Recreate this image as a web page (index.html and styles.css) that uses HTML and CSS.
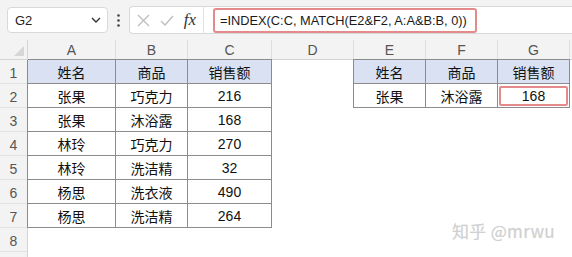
FILE: index.html
```html
<!DOCTYPE html>
<html>
<head>
  <meta charset="utf-8">
  <title>INDEX MATCH</title>
  <link rel="stylesheet" href="styles.css">
</head>
<body>
  <div class="app">
    <div class="toolbar">
      <div class="namebox">
        <span>G2</span>
        <svg width="10" height="6" viewBox="0 0 10 6"><path d="M1 1 L5 5 L9 1" fill="none" stroke="#333" stroke-width="1.4"/></svg>
      </div>
      <div class="dots">
        <svg width="3" height="13" viewBox="0 0 3 13"><circle cx="1.5" cy="1.5" r="1.3" fill="#444"/><circle cx="1.5" cy="6.5" r="1.3" fill="#444"/><circle cx="1.5" cy="11.5" r="1.3" fill="#444"/></svg>
      </div>
      <div class="fbar">
        <div class="fbtns">
          <svg width="13" height="13" viewBox="0 0 13 13"><path d="M1 1 L12 12 M12 1 L1 12" stroke="#bdbdbd" stroke-width="1.3"/></svg>
          <svg width="14" height="11" viewBox="0 0 14 11"><path d="M1 6 L5 10 L13 1" fill="none" stroke="#bdbdbd" stroke-width="1.3"/></svg>
          <span class="fx">fx</span>
        </div>
        <div class="redbox">=INDEX(C:C, MATCH(E2&amp;F2, A:A&amp;B:B, 0))</div>
      </div>
    </div>

    <div class="sheet">
      <!-- column headers -->
      <div class="corner"><span class="tri"></span></div>
      <div class="ch">A</div><div class="ch">B</div><div class="ch">C</div><div class="ch">D</div>
      <div class="ch">E</div><div class="ch">F</div><div class="ch">G</div><div class="ch last"></div>

      <!-- row 1 -->
      <div class="rh">1</div>
      <div class="c t tl tt h">姓名</div><div class="c t tt h">商品</div><div class="c t tt h">销售额</div>
      <div class="c"></div>
      <div class="c t tl tt h">姓名</div><div class="c t tt h">商品</div><div class="c t tt h">销售额</div>
      <div class="c"></div>

      <!-- row 2 -->
      <div class="rh">2</div>
      <div class="c t tl">张果</div><div class="c t">巧克力</div><div class="c t">216</div>
      <div class="c"></div>
      <div class="c t tl">张果</div><div class="c t">沐浴露</div><div class="c t sel">168</div>
      <div class="c"></div>

      <!-- row 3 -->
      <div class="rh">3</div>
      <div class="c t tl">张果</div><div class="c t">沐浴露</div><div class="c t">168</div>
      <div class="c"></div><div class="c"></div><div class="c"></div><div class="c"></div><div class="c"></div>

      <!-- row 4 -->
      <div class="rh">4</div>
      <div class="c t tl">林玲</div><div class="c t">巧克力</div><div class="c t">270</div>
      <div class="c"></div><div class="c"></div><div class="c"></div><div class="c"></div><div class="c"></div>

      <!-- row 5 -->
      <div class="rh">5</div>
      <div class="c t tl">林玲</div><div class="c t">洗洁精</div><div class="c t">32</div>
      <div class="c"></div><div class="c"></div><div class="c"></div><div class="c"></div><div class="c"></div>

      <!-- row 6 -->
      <div class="rh">6</div>
      <div class="c t tl">杨思</div><div class="c t">洗衣液</div><div class="c t">490</div>
      <div class="c"></div><div class="c"></div><div class="c"></div><div class="c"></div><div class="c"></div>

      <!-- row 7 -->
      <div class="rh">7</div>
      <div class="c t tl">杨思</div><div class="c t">洗洁精</div><div class="c t">264</div>
      <div class="c"></div><div class="c"></div><div class="c"></div><div class="c"></div><div class="c"></div>

      <!-- row 8, and the top of row 9 -->
      <div class="rh">8</div>
      <div class="c"></div><div class="c"></div><div class="c"></div><div class="c"></div><div class="c"></div><div class="c"></div><div class="c"></div><div class="c"></div>
      <div class="rh"></div>
    </div>

    <div class="watermark">知乎 @mrwu</div>
  </div>
</body>
</html>
```

FILE: styles.css
```css
body {
  margin: 0;
  background: #fff;
  font-family: "Liberation Sans", "Noto Sans CJK SC", sans-serif;
}

.app {
  position: relative;
  width: 572px;
  height: 257px;
  overflow: hidden;
}

/* formula bar */
.toolbar {
  display: flex;
  align-items: center;
  height: 40px;
  padding-left: 7px;
  background: #f3f3f3;
  box-sizing: border-box;
}

.namebox {
  display: flex;
  align-items: center;
  justify-content: space-between;
  width: 101px;
  height: 26px;
  padding: 0 6px 0 7px;
  box-sizing: border-box;
  background: #fff;
  border: 1px solid #d9d9d9;
  border-radius: 4px;
  font-size: 13px;
  color: #222;
}

.dots {
  display: flex;
  justify-content: center;
  width: 21px;
}

.fbar {
  flex: 1;
  display: flex;
  align-items: center;
  height: 26px;
  background: #fff;
  border: 1px solid #d9d9d9;
  border-right: none;
  border-radius: 4px 0 0 4px;
}

.fbtns {
  display: flex;
  align-items: center;
  justify-content: space-between;
  width: 74px;
  height: 100%;
  padding: 0 7px 0 7px;
  box-sizing: border-box;
  border-right: 1px solid #e3e3e3;
}

.fx {
  font-family: "Liberation Serif", serif;
  font-style: italic;
  font-size: 17px;
  color: #333;
}

.redbox {
  display: flex;
  align-items: center;
  width: 264px;
  height: 25px;
  margin-left: 9px;
  padding-left: 5px;
  box-sizing: border-box;
  border: 2px solid #e58a8a;
  border-radius: 3px;
  font-size: 12.8px;
  color: #1a1a1a;
  white-space: nowrap;
}

/* sheet */
.sheet {
  display: grid;
  grid-template-columns: 28px 88px 72px 84px 82px 72px 72px 72px 1fr;
  grid-template-rows: 20px repeat(9, 24px);
}

.corner {
  position: relative;
  background: #f3f3f3;
  border-right: 1px solid #d4d4d4;
  border-bottom: 1px solid #d4d4d4;
}

.tri {
  position: absolute;
  right: 3px;
  bottom: 3px;
  width: 0;
  height: 0;
  border-left: 10px solid transparent;
  border-bottom: 10px solid #d6d6d6;
}

.ch {
  display: flex;
  align-items: flex-end;
  justify-content: center;
  padding-bottom: 1px;
  background: #f3f3f3;
  border-right: 1px solid #dedede;
  border-bottom: 1px solid #d4d4d4;
  font-size: 14px;
  color: #555;
}

.ch.last {
  border-right: none;
}

.rh {
  display: flex;
  align-items: center;
  justify-content: center;
  padding-top: 2px;
  background: #f3f3f3;
  border-right: 1px solid #d4d4d4;
  border-bottom: 1px solid #e2e2e2;
  font-size: 14px;
  color: #555;
}

.c {
  display: flex;
  align-items: center;
  justify-content: center;
  padding-top: 1px;
  font-size: 14px;
  color: #111;
}

.t {
  border-right: 1px solid #8c8c8c;
  border-bottom: 1px solid #8c8c8c;
}

.tl {
  margin-left: -1px;
  border-left: 1px solid #8c8c8c;
}

.tt {
  margin-top: -1px;
  border-top: 1px solid #8c8c8c;
}

.h {
  background: #d9e1f2;
}

.sel {
  position: relative;
}

.sel::after {
  content: "";
  position: absolute;
  inset: 2px 1px 1px 1px;
  border: 2px solid #e58a8a;
  border-radius: 2px;
}

.watermark {
  position: absolute;
  left: 452px;
  top: 218px;
  font-family: "Noto Sans CJK SC", sans-serif;
  font-size: 17px;
  letter-spacing: 0.3px;
  color: #d0d0d0;
  text-shadow: 0 0 1px #e8e8e8;
}
```
